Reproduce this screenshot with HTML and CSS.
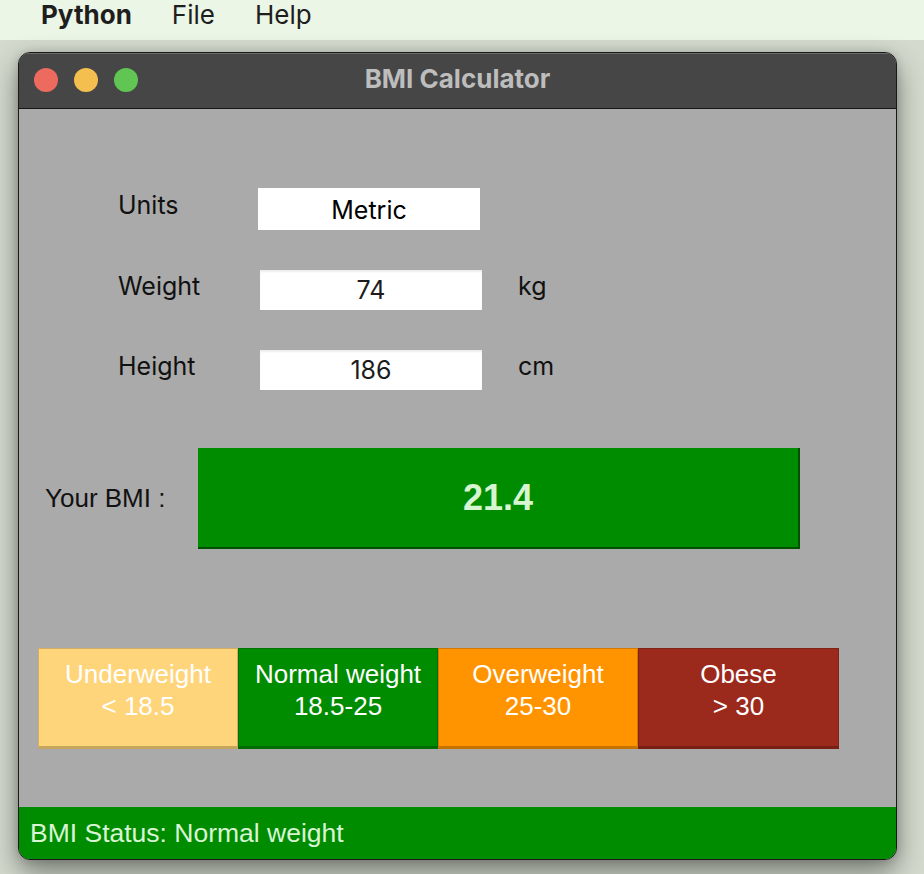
FILE: index.html
```html
<!DOCTYPE html>
<html>
<head>
<meta charset="utf-8">
<link rel="stylesheet" href="styles.css">
</head>
<body>
<div class="menubar">
  <span class="menu-item app">Python</span>
  <span class="menu-item">File</span>
  <span class="menu-item">Help</span>
</div>
<div class="window">
  <div class="titlebar">
    <div class="lights">
      <span class="light red"></span>
      <span class="light yellow"></span>
      <span class="light green"></span>
    </div>
    <div class="title">BMI Calculator</div>
    <div></div>
  </div>
  <div class="content">
    <div class="form">
      <div class="row">
        <span class="label">Units</span>
        <div class="field select">Metric</div>
      </div>
      <div class="row">
        <span class="label">Weight</span>
        <div class="field entry">74</div>
        <span class="unit">kg</span>
      </div>
      <div class="row">
        <span class="label">Height</span>
        <div class="field entry">186</div>
        <span class="unit">cm</span>
      </div>
    </div>
    <div class="bmi-row">
      <span class="bmi-label">Your BMI :</span>
      <div class="bmi-box">21.4</div>
    </div>
    <div class="cats">
      <div class="cat under">Underweight<br>&lt; 18.5</div>
      <div class="cat normal">Normal weight<br>18.5-25</div>
      <div class="cat over">Overweight<br>25-30</div>
      <div class="cat obese">Obese<br>&gt; 30</div>
    </div>
  </div>
  <div class="status">BMI Status: Normal weight</div>
</div>
</body>
</html>
```
FILE: styles.css
```css
* { box-sizing: border-box; }
html, body { margin: 0; padding: 0; }
body {
  width: 924px;
  height: 874px;
  overflow: hidden;
  background: #d4dbce;
  font-family: Inter, "Liberation Sans", sans-serif;
}
.menubar {
  height: 40px;
  background: #ebf6e6;
  display: flex;
  align-items: flex-start;
  padding-left: 41px;
  gap: 40px;
  font-size: 26px;
  line-height: 30px;
  color: #1e1e1e;
}
.menu-item.app { font-weight: 700; }
.window {
  margin: 12px 0 0 18px;
  width: 879px;
  height: 808px;
  border: 1px solid #1a1a1a;
  border-radius: 12px;
  overflow: hidden;
  background: #aaaaaa;
  box-shadow: 0 12px 28px rgba(0,0,0,0.45), 0 0 8px rgba(0,0,0,0.15);
  display: flex;
  flex-direction: column;
}
.titlebar {
  height: 56px;
  flex: none;
  background: #464646;
  border-top: 1px solid #6a6a6a;
  border-bottom: 1px solid #161616;
  display: grid;
  grid-template-columns: 1fr auto 1fr;
  align-items: center;
}
.lights {
  display: flex;
  gap: 16px;
  padding-left: 15px;
  padding-bottom: 3px;
}
.light {
  width: 24px;
  height: 24px;
  border-radius: 50%;
}
.light.red { background: #ed6a5e; }
.light.yellow { background: #f5bf4f; }
.light.green { background: #61c554; }
.title {
  color: #bdbdbd;
  font-weight: 700;
  font-size: 26px;
  padding-bottom: 5px;
}
.content {
  flex: 1;
  padding-top: 79px;
}
.form {
  padding-left: 99px;
  display: flex;
  flex-direction: column;
  gap: 40px;
}
.row {
  display: flex;
  align-items: center;
}
.label {
  width: 142px;
  font-size: 25px;
  color: #111;
  padding-bottom: 9px;
}
.field {
  width: 222px;
  background: #fff;
  text-align: center;
  font-size: 25px;
  color: #1c1c1c;
}
.field.select {
  height: 42px;
  line-height: 44px;
  margin-left: -2px;
  color: #000;
}
.field.entry {
  height: 40px;
  line-height: 41px;
  box-shadow: inset 0 2px 2px rgba(0,0,0,0.07);
}
.unit {
  margin-left: 36px;
  font-size: 25px;
  color: #111;
  padding-bottom: 9px;
}
.bmi-row {
  margin-top: 58px;
  display: flex;
  align-items: center;
  padding-left: 26px;
}
.bmi-label {
  width: 153px;
  font-family: "Liberation Sans", Arial, sans-serif;
  font-size: 26px;
  color: #111;
}
.bmi-box {
  width: 602px;
  height: 101px;
  background: #008c00;
  border-right: 2px solid #005200;
  border-bottom: 2px solid #005200;
  color: #d6f5d0;
  font-family: "Liberation Sans", Arial, sans-serif;
  font-weight: 700;
  font-size: 36px;
  display: flex;
  align-items: center;
  justify-content: center;
}
.cats {
  margin-top: 99px;
  margin-left: 19px;
  display: flex;
}
.cat {
  width: 200px;
  height: 101px;
  border: 1px solid rgba(0,0,0,0.18);
  border-bottom: 3px solid rgba(0,0,0,0.22);
  color: #fff;
  font-family: "Liberation Sans", Arial, sans-serif;
  font-size: 26px;
  line-height: 32px;
  text-align: center;
  padding-top: 9px;
}
.cat.under { background: #ffd57b; }
.cat.normal { background: #008c00; }
.cat.over { background: #ff9400; }
.cat.obese { background: #9b2a1d; width: 201px; }
.status {
  height: 52px;
  flex: none;
  background: #008c00;
  color: #d9f5d3;
  font-family: "Liberation Sans", Arial, sans-serif;
  font-size: 26.5px;
  display: flex;
  align-items: center;
  padding-left: 11px;
}
```
